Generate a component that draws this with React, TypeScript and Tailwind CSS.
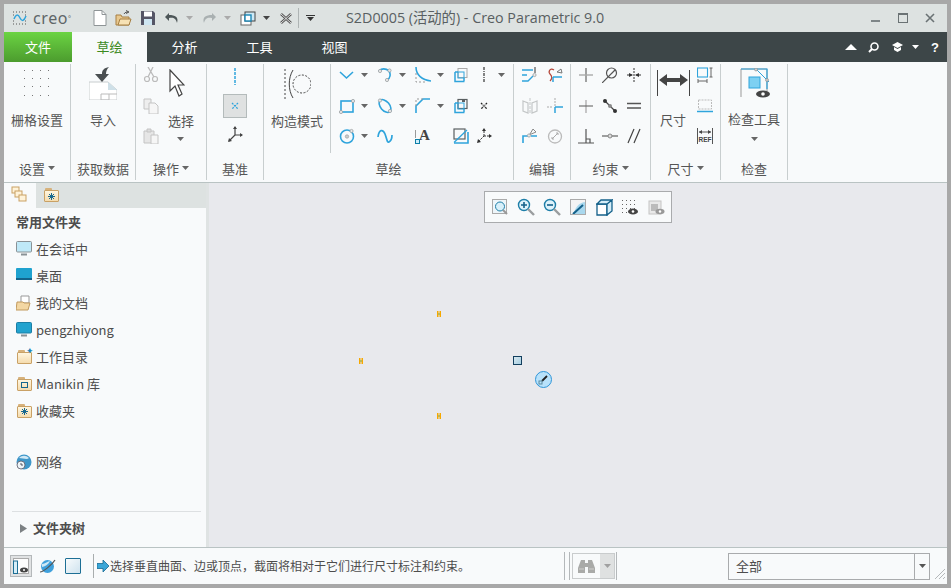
import React from "react";

const B = "#2fa4dc";
const G = "#5a5f61";
const H = "#9aa0a2";

type P = { w?: number; h?: number; vb?: string; children: React.ReactNode; cls?: string };
const S = ({ w = 16, h = 16, vb, children, cls }: P) => (
  <svg width={w} height={h} viewBox={vb ?? `0 0 ${w} ${h}`} fill="none" className={"block shrink-0 " + (cls ?? "")}>
    {children}
  </svg>
);
const Dot = ({ x, y, r = 1.6, c = H }: { x: number; y: number; r?: number; c?: string }) => (
  <circle cx={x} cy={y} r={r} fill="#e8e8e8" stroke={c} strokeWidth={0.8} />
);
const Caret = ({ c = "#666", w = 7 }: { c?: string; w?: number }) => (
  <svg width={w} height={4} viewBox="0 0 7 4" className="block shrink-0"><path d="M0 0h7L3.500 4z" fill={c} /></svg>
);
const Lbl = ({ t, caret }: { t: string; caret?: boolean }) => (
  <div className="h-[22px] pb-[2px] flex items-center justify-center gap-[3px] text-[13px] leading-none text-[#555]">
    <span>{t}</span>
    {caret && <Caret />}
  </div>
);

const Group = ({ w, label, caret, children }: { w: string; label: string; caret?: boolean; children: React.ReactNode }) => (
  <div className={`${w} h-[116px] shrink-0 flex flex-col border-r border-[#c8cecf]`}>
    <div className="h-[94px] relative">{children}</div>
    <Lbl t={label} caret={caret} />
  </div>
);

/* sketch icons */
const I = {
  line: <S><path d="M1 5l6.500 6L14 5" stroke={B} strokeWidth="1.600" /></S>,
  arc: <S><path d="M2 4C6 0 14 2 13 9c-.3 2-1 3-3 4" stroke={B} strokeWidth="1.600" /><Dot x={3} y={4} /><Dot x={12.500} y={3.500} /><Dot x={10} y={13} /></S>,
  fillet: <S><path d="M1 0c0 8 6 13 15 14" stroke={B} strokeWidth="1.600" /><path d="M1 6v9h9" stroke="#999" strokeDasharray="2 2" /></S>,
  offset: <S><rect x="5" y="1.500" width="9" height="9" stroke="#aaa" /><path d="M2 5v9.500h9.500M2 5h3M11 11v3" stroke={B} strokeWidth="1.500" /><rect x="5" y="5" width="6" height="6" stroke={B} /></S>,
  center: <S><path d="M8 0v16" stroke="#333" strokeWidth="1.200" strokeDasharray="3 1 1 1" /></S>,
  rect: <S><rect x="2" y="3" width="12" height="11" stroke={B} strokeWidth="1.600" /><Dot x={2} y={14} /><Dot x={14} y={3} /></S>,
  ellipse: <S><ellipse cx="8" cy="8" rx="4.500" ry="7.500" transform="rotate(-40 8 8)" stroke={B} strokeWidth="1.600" /><Dot x={3} y={2.500} /><Dot x={13} y={13} /></S>,
  chamfer: <S><path d="M1 15V8l7-7h7" stroke={B} strokeWidth="1.600" /><path d="M1 8V1h7" stroke="#999" strokeDasharray="2 2" /></S>,
  thicken: <S><rect x="5" y="1.500" width="9" height="9" stroke={G} strokeWidth="1.200" /><path d="M2 5v9.500h9.500M2 5h3M11 11v3" stroke={B} strokeWidth="1.500" /><rect x="5" y="5" width="6" height="6" stroke={B} /><rect x="9" y="1" width="3" height="3" fill={G} /></S>,
  point: <S><path d="M5 5l6 6M11 5l-6 6" stroke="#222" strokeWidth="1.300" strokeDasharray="2 1" /><circle cx="8" cy="8" r="1" fill="#fff" stroke="#222" strokeWidth=".5" /></S>,
  circle: <S><circle cx="8" cy="8.500" r="6.500" stroke={B} strokeWidth="1.600" /><circle cx="8" cy="8.500" r="1.700" fill="#ccc" stroke={H} strokeWidth=".7" /><Dot x={12.500} y={3} /></S>,
  spline: <S><path d="M1 9c1-8 5-8 7-3s2 9 4 8 3-3 3-7" stroke={B} strokeWidth="1.700" /></S>,
  text: (
    <div className="relative w-[16px] h-[16px]">
      <span className="absolute left-[4px] top-[-3px] text-[15px] font-bold leading-[20px] text-[#444] [font-family:'Liberation_Serif',serif]">A</span>
      <span className="absolute left-0 top-[2px] w-px h-[8px] bg-[#999]" />
      <span className="absolute left-0 bottom-0 w-[5px] h-[5px] border border-[#0e7fa8] bg-[#cfeefb]" />
    </div>
  ),
  palette: <S><rect x="1" y="1" width="11" height="10" stroke={G} strokeWidth="1.200" /><path d="M1 14.500L14 2" stroke={B} strokeWidth="1.300" /><path d="M1 15h14V4" stroke={B} strokeWidth="1.600" /></S>,
  coord: <S><path d="M8 8V2M8 8h5M8 8l-5 5" stroke="#333" strokeDasharray="2 1" /><path d="M8 0l2 3H6zM16 8l-3 2V6zM1 15l1-4 3 3z" fill="#333" /></S>,
  divide: <S><path d="M0 3h11M0 8h5" stroke={B} strokeWidth="1.400" /><path d="M0 14h6l5-5" stroke={B} strokeWidth="1.400" /><path d="M13 0v6" stroke="#333" /><Dot x={12.500} y={8} /></S>,
  modify: <S><path d="M7 3c-4-3-6 2-4 4s3 4 0 7" stroke="#b5483a" strokeWidth="1.200" /><path d="M6 10h9M6 10v5" stroke={B} strokeWidth="1.500" /><path d="M10 5l4-3 1 4z" stroke="#777" /></S>,
  mirror: <S><path d="M1 3l5 2v10l-5-2zM15 3l-5 2v10l5-2z" stroke="#c4c7c8" strokeWidth="1.200" /><path d="M8 0v16" stroke="#c4c7c8" strokeDasharray="3 1" /></S>,
  corner: <S><path d="M8 0v8M0 9h6" stroke="#aaa" strokeDasharray="2 1" /><path d="M8 9h8M8 9v6" stroke={B} strokeWidth="1.500" /></S>,
  project: <S><path d="M1 15V8h5M9 8h6" stroke={B} strokeWidth="1.600" /><path d="M7 7l7-3M8 6l3-5 3 3" stroke="#888" /><Dot x={7} y={7.500} /></S>,
  rotate: <S><circle cx="8" cy="8.500" r="6.500" stroke="#bbb" strokeWidth="1.300" /><path d="M5 11l6-6M9 5h2v2M5 9v2h2" stroke="#aaa" /></S>,
  vert: <S><path d="M8 1v14" stroke="#666" strokeWidth="1.200" /><path d="M1 8h14" stroke="#aaa" strokeWidth="1.400" /></S>,
  tangent: <S><circle cx="9.500" cy="6" r="5" stroke="#555" strokeWidth="1.200" /><path d="M0 16L13 3" stroke="#555" strokeWidth="1.200" /></S>,
  midp: <S><path d="M1 8h5M10 8h5M8 1v14" stroke="#333" strokeDasharray="2 1" /><path d="M7 8L3 6v4zM9 8l4-2v4z" fill="#333" /></S>,
  horiz: <S><path d="M8 2v13" stroke="#aaa" strokeWidth="1.300" /><path d="M1 8h14" stroke="#666" strokeWidth="1.100" /></S>,
  coinc: <S><path d="M2 2l12 12" stroke="#444" strokeWidth="1.200" /><circle cx="3" cy="3" r="2" fill="#333" /><circle cx="8" cy="8" r="2" fill="#888" /><circle cx="13" cy="13" r="2" fill="#333" /></S>,
  equal: <S><path d="M1 5.500h14M1 10h14" stroke="#555" strokeWidth="1.300" /></S>,
  perp: <S><path d="M0 15h16M8 1v14M8 11h4v4" stroke="#555" strokeWidth="1.200" /></S>,
  midline: <S><path d="M0 8h16" stroke="#555" strokeWidth="1.100" /><circle cx="8" cy="8" r="2" fill="#ddd" stroke="#888" /></S>,
  parallel: <S><path d="M2 15L8 1M8 15l6-14" stroke="#444" strokeWidth="1.200" /></S>,
};

const SketchCell = ({ icon, caret }: { icon: React.ReactNode; caret?: boolean }) => (
  <div className="flex items-start gap-[6px] h-[30.5px] pt-[3px]">
    {icon}
    {caret && <div className="h-[16px] flex items-center"><Caret /></div>}
  </div>
);

const Folder = ({ children }: { children?: React.ReactNode }) => (
  <div className="relative w-[15px] h-[14px]">
    <div className="absolute left-[1px] top-0 w-[7px] h-[3px] rounded-t-[1px] bg-[#d7b27c]" />
    <div className="absolute left-0 top-[2px] w-[15px] h-[12px] rounded-[1px] border border-[#c9a165] bg-gradient-to-b from-[#fff6df] to-[#f5dcae] flex items-center justify-center">
      {children}
    </div>
  </div>
);
const Star = () => (
  <S w={7} h={7}><path d="M3.500 0v7M0 3.500h7M1 1l5 5M6 1L1 6" stroke="#17688f" strokeWidth="1" /></S>
);

const Monitor = ({ light }: { light?: boolean }) => (
  <S h={15}>
    <rect x=".5" y=".5" width="15" height="10.500" rx="1" fill={light ? "#bfe9f8" : "#22a3cf"} stroke={light ? "#8a9296" : "#1b7ea5"} />
    <path d="M5 13.500h6" stroke="#8a9296" strokeWidth="2" />
  </S>
);

const items: [React.ReactNode, string][] = [
  [<Monitor light />, "在会话中"],
  [<S h={12} cls="mb-[3px]"><rect width="16" height="11" rx="1" fill="#1fa2cf" /><path d="M0 10h16v2H0z" fill="#13638a" /></S>, "桌面"],
  [<S><path d="M5 1h8v7H5z" fill="#fff" stroke="#999" /><path d="M1 7h6l1 1h6l-2 7H0z" fill="#f3d7a3" stroke="#c19a5e" /></S>, "我的文档"],
  [<Monitor />, "pengzhiyong"],
  [<div className="relative"><Folder /><span className="absolute right-[-2px] top-[-4px] text-[9px] leading-[10px] text-[#1d86bb]">✦</span></div>, "工作目录"],
  [<Folder><div className="w-[7px] h-[6px] border border-[#17688f]" /></Folder>, "Manikin 库"],
  [<Folder><Star /></Folder>, "收藏夹"],
];

const NavItem = ({ icon, t }: { icon: React.ReactNode; t: string }) => (
  <div className="h-[27px] flex items-center gap-[4px] text-[13px] text-[#4d4d4d]">
    <div className="w-[16px] flex justify-center items-center">{icon}</div>
    <span>{t}</span>
  </div>
);

const Tab = ({ t, active }: { t: string; active?: boolean }) => (
  <div className={`w-[75px] h-full flex items-center justify-center text-[13px] ${active ? "bg-[#f8fafb] text-[#3d8a1f]" : "text-white"}`}>{t}</div>
);

const Lens = ({ sign }: { sign?: string }) => (
  <S w={18} h={18}>
    <circle cx="7" cy="7" r="5.500" fill="#dff3fb" stroke="#1d7ea8" strokeWidth="1.400" />
    {sign && <path d={sign} stroke="#14618a" strokeWidth="1.600" />}
    <path d="M11 11l6 6" stroke="#9a9d9f" strokeWidth="2.400" />
  </S>
);

const ToolCell = ({ children }: { children: React.ReactNode }) => (
  <div className="w-[26px] flex items-center justify-center">{children}</div>
);

export default function App() {
  return (
    <div className="w-[951px] h-[588px] overflow-hidden border-[4px] border-[#a8a8a8] flex flex-col bg-[#f8fafb] [font-family:'Noto_Sans_CJK_SC','Noto_Sans',sans-serif]">
      {/* title bar */}
      <div className="h-[28px] shrink-0 bg-[#dde2e1] flex items-center">
        <div className="w-[9px]" />
        <S w={14} h={14}>
          <path d="M0 1h14M0 4h2M12 4h2M0 10h2M12 10h2M0 13h14" stroke="#555" strokeDasharray="1 2" />
          <path d="M1 8c2-5 4-5 6-1s4 3 6-2" stroke={B} strokeWidth="1.500" />
        </S>
        <span className="ml-[6px] w-[60px] text-[16px] leading-none text-[#5f6668] [font-family:'Noto_Sans',sans-serif] tracking-[0.6px]">creo<sup className="text-[7px]">°</sup></span>
        <div className="flex items-center">
          <S w={14} h={16}><path d="M1 .5h8l4 4v11H1z" fill="#fff" stroke="#8e9496" /><path d="M9 .5v4h4" stroke="#8e9496" /></S>
          <div className="w-[8px]" />
          <S w={17} h={16}><path d="M1 5h5l1 2h7v8H1z" fill="#e8c88f" stroke="#a67f42" /><path d="M3 15l2-6h11l-2 6z" fill="#f6e1b4" stroke="#a67f42" /><path d="M9 4c1-2 3-2 4-2M11 .5l3 1.500-3 1.500" stroke="#555" /></S>
          <div className="w-[8px]" />
          <S w={16} h={16}><path d="M1 1h12l2 2v12H1z" fill="#556" /><rect x="4" y="1.500" width="8" height="5" fill="#fff" /><rect x="4" y="9" width="8" height="6" fill="#cfe6f2" /></S>
          <div className="w-[8px]" />
          <S w={16} h={14}><path d="M5 2L1 6l4 4V7c4-1 7 0 8 5 2-6-2-8-8-8z" fill="#4d5658" /></S>
          <div className="w-[6px]" />
          <Caret c="#aaa" />
          <div className="w-[9px]" />
          <S w={15} h={14}><path d="M10 2l4 4-4 4V7C6 6 3 7 2 12 0 6 4 4 10 4z" fill="#a9b0b1" /></S>
          <div className="w-[7px]" />
          <Caret c="#aaa" />
          <div className="w-[9px]" />
          <S w={16} h={15}><rect x="1" y="4" width="10" height="10" fill="#fff" stroke="#666" /><rect x="5" y="1" width="10" height="9" fill="#cdeaf7" stroke="#444" /><rect x="5" y="4" width="6" height="6" fill="#fff" stroke="#1a86b5" strokeWidth="1.400" /></S>
          <div className="w-[7px]" />
          <Caret c="#444" />
          <div className="w-[10px]" />
          <S w={12} h={11}><path d="M1 1l10 9M11 1L1 10" stroke="#555" strokeWidth="2.600" /><path d="M1 1l10 9M11 1L1 10" stroke="#fff" strokeWidth=".8" /></S>
          <div className="w-[6px]" />
          <div className="w-px h-[20px] bg-[#aeb4b4]" />
          <div className="w-[7px]" />
          <div className="flex flex-col items-center gap-[1px]"><div className="w-[9px] h-px bg-[#333]" /><Caret c="#333" w={9} /></div>
        </div>
        <span className="ml-[31px] text-[14.3px] leading-none text-[#595f61] [font-family:'Open_Sans','Noto_Sans_CJK_SC',sans-serif]">S2D0005 (活动的) - Creo Parametric 9.0</span>
        <div className="ml-auto flex items-center">
          <div className="w-[9px] h-[2px] mt-[5px] bg-[#7e8688]" />
          <div className="ml-[18px] w-[10px] h-[10px] border border-[#6a7274] border-t-[2px]" />
          <S w={10} h={10} cls="ml-[17px] mr-[12px]"><path d="M1 1l8 8M9 1L1 9" stroke="#6a7274" strokeWidth="1.600" /></S>
        </div>
      </div>

      {/* tabs */}
      <div className="h-[30px] shrink-0 bg-[#3d4648] flex items-center">
        <div className="w-[68px] h-full flex items-center justify-center text-[13px] text-white bg-gradient-to-b from-[#6bd443] to-[#4c9c2e]">文件</div>
        <Tab t="草绘" active />
        <Tab t="分析" />
        <Tab t="工具" />
        <Tab t="视图" />
        <div className="ml-auto flex items-center mr-[8px]">
          <S w={12} h={7}><path d="M6 0l6 6H0z" fill="#fff" /></S>
          <S w={11} h={11} cls="ml-[11px]"><circle cx="6.500" cy="4.500" r="3.500" stroke="#fff" strokeWidth="1.600" /><path d="M4 7l-3 3" stroke="#fff" strokeWidth="2" /></S>
          <S w={11} h={10} cls="ml-[13px]"><path d="M5.500 0L11 3 5.500 6 0 3z" fill="#fff" /><path d="M2 5v3l3.500 2L9 8V5L5.500 7z" fill="#fff" /></S>
          <div className="ml-[9px]"><Caret c="#fff" /></div>
          <span className="ml-[12px] text-[13px] font-bold leading-none text-white [font-family:'Liberation_Sans',sans-serif]">?</span>
        </div>
      </div>

      {/* ribbon */}
      <div className="h-[121px] shrink-0 bg-[#f8fafb] border-b border-[#b9c3c3] flex items-start pt-[2px]">
        <Group w="w-[67px]" label="设置" caret>
          <div className="flex flex-col items-center pt-[5px]">
            <S w={28} h={28}>
              {[1, 9, 17, 25].flatMap((x) => [1, 9, 17, 26].map((y) => <rect key={x + "-" + y} x={x} y={y} width="1" height="1" fill="#777" />))}
            </S>
            <div className="mt-[14px] text-[13px] leading-[18px] text-[#555]">栅格设置</div>
          </div>
        </Group>
        <Group w="w-[65px]" label="获取数据">
          <div className="flex flex-col items-center pt-[3px]">
            <S w={28} h={33}>
              <path d="M0 15h19l9 8v10H0z" fill="#fff" stroke="#c8cdce" />
              <path d="M19 15l9 8h-9z" fill="#cfe0e8" />
              <path d="M12 27h8v6h-8zM20 27h8" stroke="#bbb" />
              <path d="M20 0c-5 1-7 3-7 7H6l7 8 7-8h-3c0-3 1-5 3-7z" fill="#4a4f51" />
            </S>
            <div className="mt-[11px] text-[13px] leading-[18px] text-[#555]">导入</div>
          </div>
        </Group>
        <Group w="w-[71px]" label="操作" caret>
          <div className="flex h-full">
            <div className="w-[36px] pl-[7px] flex flex-col">
              <SketchCell icon={<S><circle cx="4" cy="12" r="2.500" stroke="#bbb" strokeWidth="1.200" /><circle cx="12" cy="12" r="2.500" stroke="#bbb" strokeWidth="1.200" /><path d="M5 10L10 0M11 10L5 0" stroke="#bbb" strokeWidth="1.300" /></S>} />
              <SketchCell icon={<S><path d="M1 1h7v10H1z" fill="#eee" stroke="#c4c4c4" /><path d="M6 5h6l3 3v8H6z" fill="#f6f6f6" stroke="#c4c4c4" /></S>} />
              <SketchCell icon={<S><path d="M1 3h10v12H1z" fill="#e6e6e6" stroke="#c4c4c4" /><path d="M4 1h4v3H4z" fill="#ddd" stroke="#c4c4c4" /><path d="M8 7h7v9H8z" fill="#f6f6f6" stroke="#c4c4c4" /></S>} />
            </div>
            <div className="flex-1 flex flex-col items-center pr-[12px]">
              <S w={16} h={29} cls="mt-[5px] ml-[-7px]"><path d="M1 1l14 15H9l4 9-3 2-4-10-5 5z" fill="#fff" stroke="#444" strokeWidth="1.200" /></S>
              <div className="mt-[14px] whitespace-nowrap text-[13px] leading-[18px] text-[#555]">选择</div>
              <div className="mt-[7px]"><Caret /></div>
            </div>
          </div>
        </Group>
        <Group w="w-[57px]" label="基准">
          <div className="flex flex-col items-center pt-[4px]">
            <S w={2} h={17}><path d="M1 0v17" stroke={B} strokeWidth="1.500" strokeDasharray="3 1" /></S>
            <div className="mt-[9px] w-[24px] h-[24px] bg-[#dfe1e1] border border-[#b4bbbb] flex items-center justify-center">
              <S w={8} h={8}><path d="M1 1l6 6M7 1L1 7" stroke={B} strokeWidth="1.300" strokeDasharray="2 1" /></S>
            </div>
            <S w={16} h={18} cls="mt-[8px]"><path d="M8 9V1M8 9h7M8 9l-6 6" stroke="#444" strokeWidth="1.200" /><path d="M8 0l2 3H6zM16 9l-3 2V7zM1 16l1-4 3 3z" fill="#444" /></S>
          </div>
        </Group>
        <Group w="w-[250px]" label="草绘">
          <div className="flex items-start">
            <div className="w-[66px] flex flex-col items-center pt-[5px]">
              <S w={27} h={30}>
                <path d="M1 0v30" stroke="#444" strokeDasharray="2 2" />
                <path d="M9 1c-5 8-5 20 0 28" stroke="#444" strokeWidth="1" />
                <circle cx="18" cy="15" r="9" stroke="#444" strokeDasharray="2 1.500" />
              </S>
              <div className="mt-[13px] text-[13px] leading-[18px] text-[#555]">构造模式</div>
            </div>
            <div className="w-px h-[89px] bg-[#c8cecf]" />
            <div className="grid grid-cols-[38px_38px_38px_23px_30px] pl-[8px]">
              <SketchCell icon={I.line} caret />
              <SketchCell icon={I.arc} caret />
              <SketchCell icon={I.fillet} caret />
              <SketchCell icon={I.offset} />
              <SketchCell icon={I.center} caret />
              <SketchCell icon={I.rect} caret />
              <SketchCell icon={I.ellipse} caret />
              <SketchCell icon={I.chamfer} caret />
              <SketchCell icon={I.thicken} />
              <SketchCell icon={I.point} />
              <SketchCell icon={I.circle} caret />
              <SketchCell icon={I.spline} />
              <SketchCell icon={I.text} />
              <SketchCell icon={I.palette} />
              <SketchCell icon={I.coord} />
            </div>
          </div>
        </Group>
        <Group w="w-[57px]" label="编辑">
          <div className="grid grid-cols-[25px_25px] pl-[8px]">
            <SketchCell icon={I.divide} />
            <SketchCell icon={I.modify} />
            <SketchCell icon={I.mirror} />
            <SketchCell icon={I.corner} />
            <SketchCell icon={I.project} />
            <SketchCell icon={I.rotate} />
          </div>
        </Group>
        <Group w="w-[80px]" label="约束" caret>
          <div className="grid grid-cols-[24px_24px_24px] pl-[7px]">
            <SketchCell icon={I.vert} />
            <SketchCell icon={I.tangent} />
            <SketchCell icon={I.midp} />
            <SketchCell icon={I.horiz} />
            <SketchCell icon={I.coinc} />
            <SketchCell icon={I.equal} />
            <SketchCell icon={I.perp} />
            <SketchCell icon={I.midline} />
            <SketchCell icon={I.parallel} />
          </div>
        </Group>
        <Group w="w-[70px]" label="尺寸" caret>
          <div className="flex h-full">
            <div className="w-[44px] flex flex-col items-center pt-[4px]">
              <S w={33} h={28}>
                <path d="M.5 2v26M32.500 2v26" stroke="#444" />
                <path d="M2 12l8-6v4h13V6l8 6-8 6v-4H10v4z" fill="#444" />
              </S>
              <div className="mt-[15px] text-[13px] leading-[18px] text-[#555]">尺寸</div>
            </div>
            <div className="flex flex-col pl-[2px]">
              <SketchCell icon={<S><rect x=".5" y="1" width="10" height="9" stroke={B} strokeWidth="1.100" /><path d="M14 1v9M12.500 1h3M12.500 10h3M1 14h9M1 12v4M10 12v4" stroke="#666" /></S>} />
              <SketchCell icon={<S><rect x="1.500" y="2" width="13" height="9" stroke="#bbb" strokeDasharray="2 1" /><path d="M0 13.500h16" stroke={B} strokeWidth="1.500" /></S>} />
              <SketchCell icon={<S><path d="M.5 0v16M15.500 0v16M2 4h12" stroke="#555" /><path d="M2 4l3-2v4zM14 4l-3-2v4z" fill="#444" /><text x="1.500" y="14" fontSize="6.500" fontWeight="700" fill="#444" fontFamily="Liberation Sans">REF</text></S>} />
            </div>
          </div>
        </Group>
        <Group w="w-[67px]" label="检查">
          <div className="flex flex-col items-center pt-[4px]">
            <S w={32} h={32} cls="ml-[4px]">
              <path d="M1 29V1h26v22" stroke="#999" />
              <path d="M1 1h26v20" stroke={B} strokeWidth="1.200" />
              <rect x="9" y="9" width="11" height="11" fill="#7dd0f2" stroke={B} />
              <path d="M16 1l13 13" stroke={B} />
              <circle cx="16" cy="1.500" r="1.500" fill="#ccc" stroke="#888" strokeWidth=".6" />
              <circle cx="27" cy="12" r="1.500" fill="#ccc" stroke="#888" strokeWidth=".6" />
              <ellipse cx="23" cy="26" rx="7" ry="3.500" fill="#444" />
              <circle cx="23" cy="26" r="1.800" fill="#fff" />
            </S>
            <div className="mt-[10px] text-[13px] leading-[18px] text-[#555]">检查工具</div>
            <div className="mt-[9px]"><Caret /></div>
          </div>
        </Group>
      </div>

      {/* body */}
      <div className="flex-1 min-h-0 flex">
        <div className="w-[202px] shrink-0 bg-[#f8fafb] flex flex-col">
          <div className="h-[25px] shrink-0 bg-[#dde2e1] flex">
            <div className="w-[32px] bg-[#f8fafb] pl-[7px] pt-[3px]">
              <S w={16} h={16}><rect x="1" y="1" width="7" height="6" fill="#fff3d9" stroke="#c9a165" /><rect x="4" y="5" width="7" height="6" fill="#fff3d9" stroke="#c9a165" /><rect x="8" y="9" width="7" height="6" fill="#fff3d9" stroke="#c9a165" /></S>
            </div>
            <div className="pl-[8px] pt-[5px]"><Folder><Star /></Folder></div>
          </div>
          <div className="pl-[12px] h-[27px] flex items-center text-[13px] font-bold text-[#4d4d4d]">常用文件夹</div>
          <div className="pl-[12px]">
            {items.map(([ic, t]) => <NavItem key={t} icon={ic} t={t} />)}
            <div className="mt-[24px]">
              <NavItem t="网络" icon={<S><circle cx="8" cy="8" r="7.500" fill="#3f97c9" /><path d="M3 4c3-3 7-3 10 0-2 2-6 0-10 0z" fill="#cfe8f5" /><circle cx="5" cy="11" r="4" fill="#eef5f8" stroke="#556" strokeWidth=".8" /><path d="M5 9v2h2" stroke="#334" strokeWidth=".8" /></S>} />
            </div>
          </div>
          <div className="mt-auto mx-[8px] mr-[5px] border-t border-[#dde0e2] h-[36px] pb-[3px] flex items-center pl-[8px]">
            <S w={7} h={9}><path d="M0 0l7 4.500L0 9z" fill="#7c8184" /></S>
            <span className="ml-[6px] text-[13px] font-bold text-[#4d4d4d]">文件夹树</span>
          </div>
        </div>
        <div className="w-[3px] shrink-0 bg-[#dfe3e3]" />
        <div className="flex-1 relative bg-[#e8e9ed]">
          <div className="absolute left-[275px] top-[8px] w-[188px] h-[32px] bg-[#f8fafb] border border-[#a9abad] flex items-center pl-[2px]">
            <ToolCell><S w={16} h={16}><rect x=".5" y=".5" width="14" height="14" fill="#eef6fa" stroke="#aaa" /><circle cx="8" cy="7.500" r="4.500" fill="#d8f0fa" stroke="#1d7ea8" /><path d="M11 11l4 4" stroke="#999" strokeWidth="2" /></S></ToolCell>
            <ToolCell><Lens sign="M4 7h6M7 4v6" /></ToolCell>
            <ToolCell><Lens sign="M4 7h6" /></ToolCell>
            <ToolCell><S w={16} h={16}><rect width="16" height="16" fill="#a9d8ee" /><path d="M0 0h16v3C8 3 5 10 3 16H0z" fill="#f4f4f4" /><path d="M3 15L13 6" stroke="#14618a" strokeWidth="2" /><rect x=".5" y=".5" width="15" height="15" stroke="#aaa" /></S></ToolCell>
            <ToolCell><S w={17} h={17}><path d="M1 5h10v11H1z" fill="#fff" stroke="#14618a" strokeWidth="1.300" /><path d="M1 5l4-4h11l-5 4zM11 5l5-4v11l-5 4z" fill="#d4edf8" stroke="#14618a" strokeWidth="1.300" /></S></ToolCell>
            <ToolCell><S w={18} h={16}><g fill="#666">{[1, 5, 9, 13].flatMap((x) => [1, 5, 9, 13].map((y) => <rect key={x + "/" + y} x={x} y={y} width="1" height="1" />))}</g><ellipse cx="12" cy="12.500" rx="5" ry="3" fill="#444" /><circle cx="12" cy="12.500" r="1.300" fill="#fff" /></S></ToolCell>
            <ToolCell><S w={17} h={16}><rect x="1" y="2" width="12" height="13" fill="#e9e9e9" stroke="#c4c4c4" /><rect x="3" y="5" width="7" height="7" fill="#bbb" /><ellipse cx="12" cy="12.500" rx="4.500" ry="2.800" fill="#999" /><circle cx="12" cy="12.500" r="1.200" fill="#fff" /></S></ToolCell>
          </div>
          {[[228, 128], [150, 175], [228, 230]].map(([x, y]) => (
            <svg key={x + "," + y} className="absolute block" width="4" height="6" viewBox="0 0 4 6" style={{ left: x, top: y }}>
              <path d="M0 0h1.500v6H0zM2.500 0H4v6H2.500z" fill="#f6a800" />
              <path d="M1.500 2h1v2h-1z" fill="#7fa84a" />
            </svg>
          ))}
          <div className="absolute left-[304px] top-[173px] w-[9px] h-[9px] border border-[#123f5e] bg-gradient-to-br from-[#d6e7ef] to-[#a7cfe2]" />
          <div className="absolute left-[326px] top-[188px] w-[17px] h-[17px] rounded-full bg-[#b8e2fb] border border-[#2f95d8] flex items-center justify-center">
            <S w={11} h={11}><path d="M4 7l5-5" stroke="#222" strokeWidth="1.800" /><rect x="1" y="7" width="3" height="3" stroke="#5a8aa0" /></S>
          </div>
        </div>
      </div>

      {/* status bar */}
      <div className="h-[37px] shrink-0 border-t border-[#b9c3c3] bg-[#f8fafb] flex items-center">
        <div className="ml-[6px] w-[22px] h-[22px] bg-[#e0e2e3] border border-[#b4b8ba] flex items-center justify-center">
          <S w={16} h={16}><rect x=".5" y=".5" width="15" height="15" fill="#fdfdfd" stroke="#aaa" /><rect x=".5" y="3" width="4" height="12.500" fill="#d6eef8" stroke="#1d6f95" /><ellipse cx="11" cy="12" rx="4" ry="2.500" fill="#444" /><circle cx="11" cy="12" r="1" fill="#fff" /></S>
        </div>
        <S w={17} h={17} cls="ml-[7px]"><circle cx="8.500" cy="8.500" r="6.500" fill="#3fa0dc" /><path d="M3 6c3 0 6-3 8-3-1 3-6 6-8 6z" fill="#cfe8f5" /><path d="M1 14C4 14 13 7 16 2" stroke="#555" strokeWidth="1.200" /></S>
        <div className="ml-[9px] w-[16px] h-[16px] border border-[#1d6f95] bg-gradient-to-br from-[#f8fbfc] to-[#cfe3ee] rounded-[1px]" />
        <div className="ml-[12px] w-px h-[24px] bg-[#a8adae]" />
        <S w={12} h={12} cls="ml-[3px]"><path d="M0 3.500h6V0l6 6-6 6V8.500H0z" fill="#3aa6d8" stroke="#176a93" strokeWidth=".8" /></S>
        <span className="ml-[1px] w-[454px] text-[12px] leading-none text-[#4d4d4d]">选择垂直曲面、边或顶点，截面将相对于它们进行尺寸标注和约束。</span>
        <div className="w-px h-[28px] bg-[#b4b8ba]" />
        <div className="ml-[4px] w-px h-[28px] bg-[#b4b8ba]" />
        <div className="ml-[2px] w-[43px] h-[26px] border border-[#c9cccd] flex">
          <div className="flex-1 flex items-center justify-center">
            <S w={17} h={15}><path d="M3 1h4v3h3V1h4l3 8v5h-7V8H7v6H0V9z" fill="#a9aaa8" /><path d="M1 10h5M11 10h5" stroke="#d0d0ce" /></S>
          </div>
          <div className="w-[14px] bg-[#dfe1e1] flex items-center justify-center"><Caret c="#a0a0a0" /></div>
        </div>
        <div className="ml-px w-px h-[28px] bg-[#b4b8ba]" />
        <div className="ml-[111px] w-[202px] h-[27px] border border-[#a9abad] flex items-center">
          <span className="flex-1 pl-[7px] text-[13px] text-[#4d4d4d]">全部</span>
          <div className="w-[15px] h-full border-l border-[#a9abad] flex items-center justify-center"><Caret c="#555" /></div>
        </div>
        <S w={11} h={11} cls="ml-[4px] mt-[14px]"><path d="M1 11L11 1M5 11l6-6M9 11l2-2" stroke="#b4b8ba" /></S>
      </div>
    </div>
  );
}
